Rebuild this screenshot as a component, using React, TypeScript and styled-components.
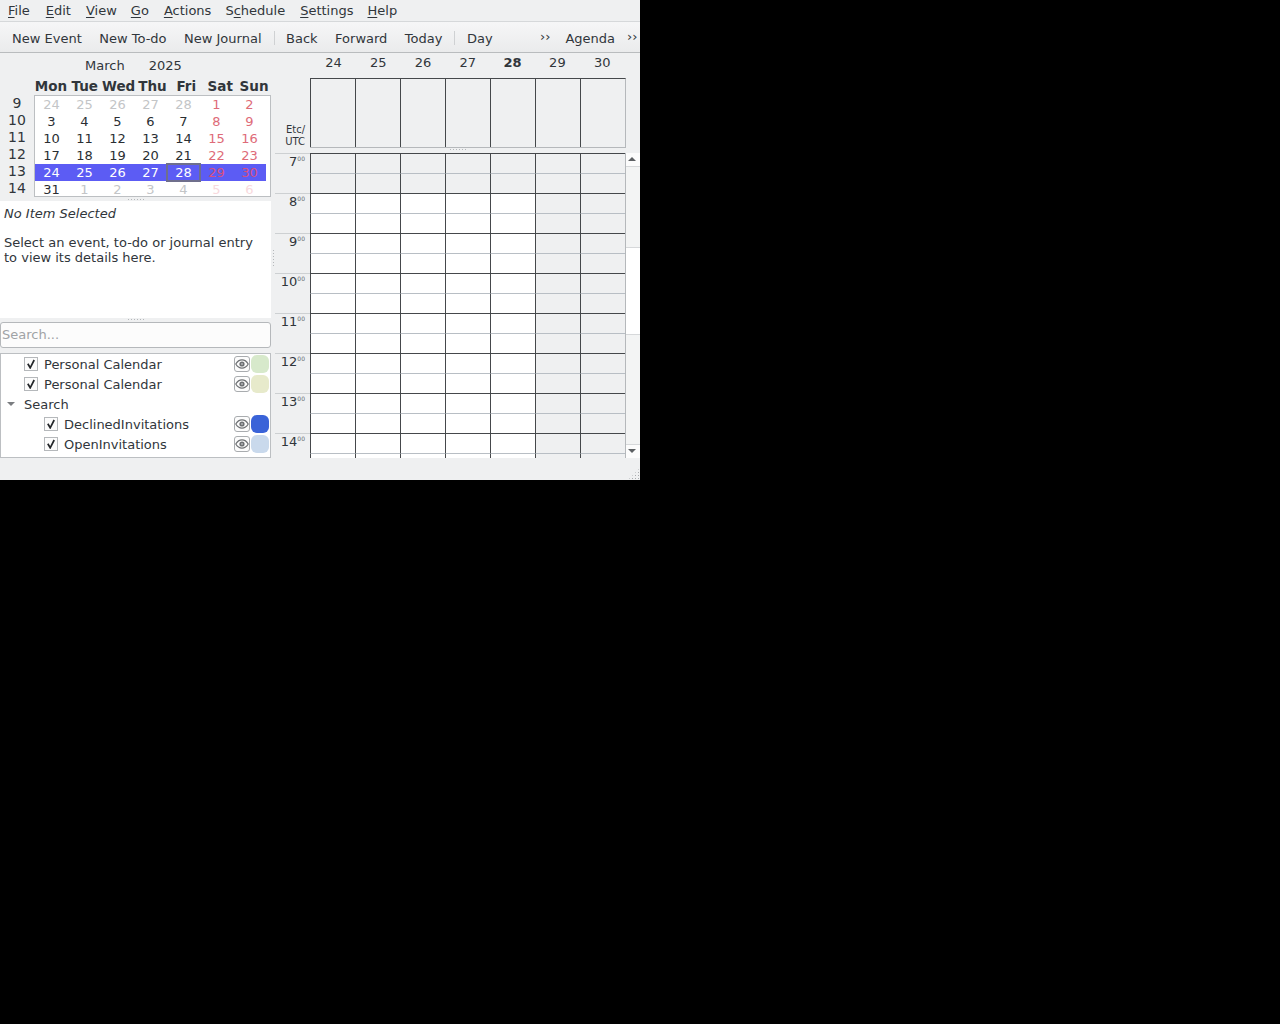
import React, { FC } from 'react';
import styled, { createGlobalStyle } from 'styled-components';

const GlobalStyle = createGlobalStyle`
  html, body {
    margin: 0;
    padding: 0;
    height: 100%;
    background: #000;
  }
  #root {
    height: 1024px;
  }
  * {
    box-sizing: border-box;
  }
`;

const Window = styled.div`
  width: 640px;
  height: 480px;
  display: flex;
  flex-direction: column;
  overflow: hidden;
  background: #eff0f1;
  color: #31363b;
  font-family: 'DejaVu Sans', sans-serif;
  font-size: 13px;
`;

const MenuBar = styled.div`
  height: 22px;
  flex: none;
  display: flex;
  align-items: center;
  gap: 14px;
  padding: 0 8px;
  border-bottom: 1px solid #d6d8da;
`;

const MenuItem = styled.span<{ $nudge: number }>`
  white-space: nowrap;
  margin-left: ${(p) => p.$nudge}px;
  u {
    text-underline-offset: 2px;
  }
`;

const ToolBar = styled.div`
  height: 31px;
  flex: none;
  display: flex;
  align-items: center;
  padding: 2px 0 0 12px;
  background: linear-gradient(#f6f6f7, #eaebec);
  border-bottom: 1px solid #b9bcbe;
`;

const ToolGroup = styled.div`
  display: flex;
  align-items: center;
  gap: 17.5px;
  width: 528px;
  flex: none;
`;

const ToolButton = styled.span`
  white-space: nowrap;
`;

const AgendaButton = styled(ToolButton)`
  margin-left: 15px;
`;

const ToolSep = styled.span`
  width: 1px;
  height: 14px;
  margin: 0 -6px 0 -5.5px;
  background: #cfd1d3;
`;

const Overflow = styled.span<{ $left: number }>`
  margin-left: ${(p) => p.$left}px;
  font-size: 13px;
  line-height: 12px;
  margin-top: -3px;
`;

const Body = styled.div`
  height: 405px;
  flex: none;
  display: flex;
`;

const LeftPane = styled.div`
  width: 271px;
  flex: none;
  display: flex;
  flex-direction: column;
`;

const MonthRow = styled.div`
  height: 24px;
  display: flex;
  align-items: center;
  padding-left: 85px;
  gap: 24px;
`;

const WeekdayRow = styled.div`
  height: 18px;
  margin-left: 34px;
  display: grid;
  grid-template-columns: repeat(7, 1fr);
  font-size: 13.5px;
  font-weight: 700;
  line-height: 18px;
  text-align: center;
  white-space: nowrap;
`;

const MiniCal = styled.div`
  display: flex;
`;

const WeekNumbers = styled.div`
  width: 34px;
  flex: none;
`;

const WeekNumber = styled.div`
  height: 17px;
  line-height: 17px;
  text-align: center;
  font-size: 14px;
`;

const DayBox = styled.div`
  width: 237px;
  height: 102px;
  overflow: hidden;
  background: #fff;
  border: 1px solid #bcbfc2;
`;

const DayRow = styled.div<{ $selected?: boolean }>`
  width: 231px;
  height: 17px;
  flex: none;
  display: grid;
  grid-template-columns: repeat(7, 33px);
  background: ${(p) => (p.$selected ? '#5c5cf4' : 'transparent')};
`;

const DayCell = styled.div<{ $color: string; $today?: boolean }>`
  height: 17px;
  line-height: 17px;
  text-align: center;
  color: ${(p) => p.$color};
  ${(p) => (p.$today ? 'outline: 2px solid #6f6f8c; outline-offset: -1px;' : '')}
`;

const HSplit = styled.div<{ $height: number; $lift?: number }>`
  height: ${(p) => p.$height}px;
  flex: none;
  display: flex;
  justify-content: center;
  align-items: center;
  padding-bottom: ${(p) => p.$lift || 0}px;
  &::after {
    content: '';
    width: 16px;
    height: 1px;
    background: repeating-linear-gradient(90deg, #b4b7ba 0 1px, transparent 1px 3px);
  }
`;

const Details = styled.div`
  height: 117px;
  flex: none;
  background: #fff;
  padding: 5px 4px;
  line-height: 15px;
`;

const DetailsTitle = styled.div`
  font-style: italic;
  margin-bottom: 14px;
`;

const SearchBox = styled.div`
  height: 26px;
  flex: none;
  margin-top: 1px;
  padding: 0 0 1px 1px;
  display: flex;
  align-items: center;
  background: #fcfcfc;
  border: 1px solid #b5b8bb;
  border-radius: 3px;
  color: #a0a3a6;
`;

const CalendarList = styled.div`
  height: 105px;
  flex: none;
  margin-top: 5px;
  background: #fff;
  border: 1px solid #bcbfc2;
`;

const ListRow = styled.div`
  height: 20px;
  display: flex;
  align-items: center;
`;

const Check = styled.span<{ $indent: number }>`
  width: 14px;
  height: 14px;
  flex: none;
  margin-left: ${(p) => p.$indent}px;
  margin-right: 6px;
  display: flex;
  align-items: center;
  justify-content: center;
  background: #fcfcfc;
  border: 1px solid #b5b8bb;
`;

const ListLabel = styled.span`
  flex: 1;
  white-space: nowrap;
`;

const GroupArrow = styled.span`
  width: 0;
  height: 0;
  flex: none;
  margin: 0 9px 0 6px;
  border-left: 4px solid transparent;
  border-right: 4px solid transparent;
  border-top: 4px solid #7a7d80;
`;

const EyeButton = styled.span`
  width: 16px;
  height: 16px;
  flex: none;
  display: flex;
  align-items: center;
  justify-content: center;
  border: 1px solid #a9acaf;
  border-radius: 3px;
  background: #fcfcfc;
`;

const Swatch = styled.span<{ $color: string }>`
  width: 18px;
  height: 18px;
  flex: none;
  margin: 0 1px;
  border-radius: 6px;
  background: ${(p) => p.$color};
`;

const VSplit = styled.div`
  width: 4px;
  flex: none;
  display: flex;
  align-items: center;
  justify-content: center;
  &::after {
    content: '';
    width: 1px;
    height: 16px;
    margin-top: 5px;
    background: repeating-linear-gradient(#b4b7ba 0 1px, transparent 1px 3px);
  }
`;

const AgendaPane = styled.div`
  width: 365px;
  flex: none;
  display: flex;
  flex-direction: column;
`;

const DateHeader = styled.div`
  height: 25px;
  flex: none;
  display: flex;
  align-items: center;
  padding-left: 36px;
  padding-bottom: 7px;
`;

const DateLabel = styled.div<{ $bold?: boolean }>`
  width: 44.8px;
  text-align: center;
  font-weight: ${(p) => (p.$bold ? 700 : 400)};
`;

const AllDayRow = styled.div`
  height: 70px;
  flex: none;
  display: flex;
`;

const ZoneLabel = styled.div`
  width: 35px;
  flex: none;
  align-self: flex-end;
  padding-right: 5px;
  text-align: right;
  font-size: 10px;
  line-height: 12px;
`;

const AllDayColumns = styled.div`
  width: 316px;
  flex: none;
  display: flex;
  border-top: 1px solid #45484b;
  border-bottom: 1px solid #b5b8bb;
  border-right: 1px solid #b5b8bb;
`;

const AllDayCell = styled.div`
  width: 45px;
  flex: none;
  border-left: 1px solid #45484b;
`;

const GridArea = styled.div`
  flex: 1;
  min-height: 0;
  display: flex;
  overflow: hidden;
`;

const TimeColumn = styled.div`
  width: 35px;
  flex: none;
`;

const TimeLabel = styled.div`
  height: 40px;
  padding-right: 5px;
  text-align: right;
  font-size: 13px;
  line-height: 15px;
  border-top: 1px solid #cdd0d2;
  sup {
    font-size: 6px;
    line-height: 0;
    vertical-align: 5px;
    color: #6b6f73;
  }
`;

const HourGrid = styled.div`
  width: 316px;
  flex: none;
  display: grid;
  grid-template-columns: repeat(7, 45px);
  grid-auto-rows: 20px;
  align-content: start;
  border-right: 1px solid #b5b8bb;
`;

const HalfHour = styled.div<{ $work: boolean; $hour: boolean }>`
  border-left: 1px solid #45484b;
  border-top: 1px solid ${(p) => (p.$hour ? '#45484b' : '#b8bec4')};
  background: ${(p) => (p.$work ? '#fff' : '#eff0f1')};
`;

const ScrollBar = styled.div`
  width: 14px;
  flex: none;
  display: flex;
  flex-direction: column;
  background: #f3f4f4;
`;

const ScrollArrow = styled.div<{ $down?: boolean }>`
  height: 14px;
  flex: none;
  display: flex;
  align-items: center;
  justify-content: center;
  padding: 0 2px 2px 0;
  background: #fcfcfc;
  ${(p) => (p.$down ? 'border-top: 1px solid #d6d8da;' : 'border-bottom: 1px solid #d6d8da;')}
  &::after {
    content: '';
    border-left: 4px solid transparent;
    border-right: 4px solid transparent;
    ${(p) => (p.$down ? 'border-top: 4px solid #5d6063;' : 'border-bottom: 4px solid #5d6063;')}
  }
`;

const ScrollThumb = styled.div`
  height: 88px;
  flex: none;
  margin-top: 80px;
  background: #fff;
  border-top: 1px solid #d6d8da;
  border-bottom: 1px solid #d6d8da;
`;

const ScrollRest = styled.div`
  flex: 1;
`;

const StatusBar = styled.div`
  height: 22px;
  flex: none;
  display: flex;
  justify-content: flex-end;
  align-items: flex-end;
`;

const Grip = styled.div`
  width: 12px;
  height: 12px;
  background-image: radial-gradient(#a9acaf 0.9px, transparent 1px);
  background-size: 3px 3px;
  clip-path: polygon(100% 0, 100% 100%, 0 100%);
`;

const EyeIcon: FC = () => (
  <svg width="14" height="10" viewBox="0 0 14 10" fill="none">
    <path d="M0.8 5C2.4 2.2 4.5 0.9 7 0.9S11.6 2.2 13.2 5C11.6 7.8 9.5 9.1 7 9.1S2.4 7.8 0.8 5Z" stroke="#6d7073" strokeWidth="1.2" />
    <circle cx="7" cy="5" r="2.6" fill="#6d7073" />
    <circle cx="7" cy="5" r="0.9" fill="#b9bcbe" />
  </svg>
);

const CheckIcon: FC = () => (
  <svg width="10" height="10" viewBox="0 0 10 10" fill="none">
    <path d="M1.8 4.8L4.2 8.8L8.2 1" stroke="#232629" strokeWidth="1.7" />
  </svg>
);

const menus: [string, string, string, number][] = [
  ['', 'F', 'ile', 0],
  ['', 'E', 'dit', 2],
  ['', 'V', 'iew', 1],
  ['', 'G', 'o', 0],
  ['', 'A', 'ctions', 1],
  ['S', 'c', 'hedule', 0],
  ['', 'S', 'ettings', 1],
  ['', 'H', 'elp', 0],
];

const weekdays = ['Mon', 'Tue', 'Wed', 'Thu', 'Fri', 'Sat', 'Sun'];
const weeks = [9, 10, 11, 12, 13, 14];

const INK = '#2a2e32';
const GREY = '#c3c5c7';
const RED = '#de6b78';
const PALE_RED = '#f8d9dd';

const days: [number, string][][] = [
  [[24, GREY], [25, GREY], [26, GREY], [27, GREY], [28, GREY], [1, RED], [2, RED]],
  [[3, INK], [4, INK], [5, INK], [6, INK], [7, INK], [8, RED], [9, RED]],
  [[10, INK], [11, INK], [12, INK], [13, INK], [14, INK], [15, RED], [16, RED]],
  [[17, INK], [18, INK], [19, INK], [20, INK], [21, INK], [22, RED], [23, RED]],
  [[24, '#fff'], [25, '#fff'], [26, '#fff'], [27, '#fff'], [28, '#fff'], [29, '#d9507f'], [30, '#d9507f']],
  [[31, INK], [1, GREY], [2, GREY], [3, GREY], [4, GREY], [5, PALE_RED], [6, PALE_RED]],
];

const calendars = [
  { indent: 23, name: 'Personal Calendar', color: '#d7e9cb' },
  { indent: 23, name: 'Personal Calendar', color: '#e7eacb' },
  { group: true, name: 'Search' },
  { indent: 43, name: 'DeclinedInvitations', color: '#3a63d8' },
  { indent: 43, name: 'OpenInvitations', color: '#c9d9ec' },
];

const dates = [24, 25, 26, 27, 28, 29, 30];
const hours = [7, 8, 9, 10, 11, 12, 13, 14];

const App: FC = () => {
  const halfHours = [];
  for (let i = 0; i < hours.length * 2; i++) {
    halfHours.push(i);
  }

  return (
    <React.Fragment>
      <GlobalStyle />
      <Window>
        <MenuBar>
          {menus.map(([before, key, rest, nudge]) => (
            <MenuItem key={key + rest} $nudge={nudge}>
              {before}
              <u>{key}</u>
              {rest}
            </MenuItem>
          ))}
        </MenuBar>
        <ToolBar>
          <ToolGroup>
            <ToolButton>New Event</ToolButton>
            <ToolButton>New To-do</ToolButton>
            <ToolButton>New Journal</ToolButton>
            <ToolSep />
            <ToolButton>Back</ToolButton>
            <ToolButton>Forward</ToolButton>
            <ToolButton>Today</ToolButton>
            <ToolSep />
            <ToolButton>Day</ToolButton>
          </ToolGroup>
          <Overflow $left={0}>››</Overflow>
          <AgendaButton>Agenda</AgendaButton>
          <Overflow $left={12}>››</Overflow>
        </ToolBar>
        <Body>
          <LeftPane>
            <MonthRow>
              <span>March</span>
              <span>2025</span>
            </MonthRow>
            <WeekdayRow>
              {weekdays.map((d) => (
                <div key={d}>{d}</div>
              ))}
            </WeekdayRow>
            <MiniCal>
              <WeekNumbers>
                {weeks.map((w) => (
                  <WeekNumber key={w}>{w}</WeekNumber>
                ))}
              </WeekNumbers>
              <DayBox>
                {days.map((row, r) => (
                  <DayRow key={r} $selected={r === 4}>
                    {row.map(([n, color], c) => (
                      <DayCell key={c} $color={color} $today={r === 4 && c === 4}>
                        {n}
                      </DayCell>
                    ))}
                  </DayRow>
                ))}
              </DayBox>
            </MiniCal>
            <HSplit $height={4} />
            <Details>
              <DetailsTitle>No Item Selected</DetailsTitle>
              Select an event, to-do or journal entry
              <br />
              to view its details here.
            </Details>
            <HSplit $height={3} />
            <SearchBox>Search...</SearchBox>
            <CalendarList>
              {calendars.map((item, i) =>
                item.group ? (
                  <ListRow key={i}>
                    <GroupArrow />
                    <ListLabel>{item.name}</ListLabel>
                  </ListRow>
                ) : (
                  <ListRow key={i}>
                    <Check $indent={item.indent as number}>
                      <CheckIcon />
                    </Check>
                    <ListLabel>{item.name}</ListLabel>
                    <EyeButton>
                      <EyeIcon />
                    </EyeButton>
                    <Swatch $color={item.color as string} />
                  </ListRow>
                )
              )}
            </CalendarList>
          </LeftPane>
          <VSplit />
          <AgendaPane>
            <DateHeader>
              {dates.map((d) => (
                <DateLabel key={d} $bold={d === 28}>
                  {d}
                </DateLabel>
              ))}
            </DateHeader>
            <AllDayRow>
              <ZoneLabel>
                Etc/
                <br />
                UTC
              </ZoneLabel>
              <AllDayColumns>
                {dates.map((d) => (
                  <AllDayCell key={d} />
                ))}
              </AllDayColumns>
            </AllDayRow>
            <HSplit $height={5} $lift={2} />
            <GridArea>
              <TimeColumn>
                {hours.map((h) => (
                  <TimeLabel key={h}>
                    {h}
                    <sup>00</sup>
                  </TimeLabel>
                ))}
              </TimeColumn>
              <HourGrid>
                {halfHours.map((i) =>
                  dates.map((d, c) => (
                    <HalfHour key={`${i}-${d}`} $hour={i % 2 === 0} $work={i >= 2 && c < 5} />
                  ))
                )}
              </HourGrid>
              <ScrollBar>
                <ScrollArrow />
                <ScrollThumb />
                <ScrollRest />
                <ScrollArrow $down />
              </ScrollBar>
            </GridArea>
          </AgendaPane>
        </Body>
        <StatusBar>
          <Grip />
        </StatusBar>
      </Window>
    </React.Fragment>
  );
};

export default App;
